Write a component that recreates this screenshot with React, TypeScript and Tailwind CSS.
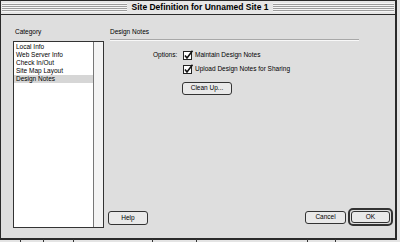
import React from "react";

const categories = ["Local Info", "Web Server Info", "Check In/Out", "Site Map Layout", "Design Notes"];

function CheckBox() {
    return (
        <svg width="11" height="10" viewBox="0 0 11 10" className="shrink-0">
            <rect x="0.5" y="1.5" width="8" height="8" fill="#fff" stroke="#222" />
            <path d="M2 5.5 L4 8 L9.5 0.8" fill="none" stroke="#111" strokeWidth="1.6" />
        </svg>
    );
}

function Button({ label, className }: { label: string; className: string }) {
    return (
        <div className={`flex items-center justify-center rounded-[3px] border border-[#333] bg-[#e9e9e9] text-[6.5px] leading-none text-black ${className}`}>
            {label}
        </div>
    );
}

export default function App() {
    return (
        <div className="relative h-[242px] w-[400px] overflow-hidden bg-[#e4e4e4] font-['Liberation_Sans',Arial,sans-serif] text-black">
            {/* ticks of the window behind */}
            <div className="absolute bottom-0 left-[20px] h-[3px] w-px bg-[#333]" />
            <div className="absolute bottom-0 left-[43px] h-[3px] w-px bg-[#333]" />
            <div className="absolute bottom-0 left-[73px] h-[3px] w-px bg-[#333]" />
            <div className="absolute bottom-0 left-[152px] h-[3px] w-px bg-[#333]" />
            <div className="absolute bottom-0 left-[196px] h-[3px] w-px bg-[#333]" />
            <div className="absolute bottom-0 left-[307px] h-[3px] w-px bg-[#333]" />
            <div className="absolute bottom-0 left-[335px] h-[3px] w-px bg-[#333]" />

            {/* Dialog window */}
            <div className="flex h-[240px] w-[397px] flex-col border border-r-2 border-b-2 border-[#2a2a2a] bg-[#dedede]">
                {/* Title bar */}
                <div className="relative h-[14px] shrink-0 border-b border-[#2a2a2a] bg-[#e6e6e6] px-[1px] py-[2px]">
                    <div className="h-[9px] w-full bg-[repeating-linear-gradient(to_bottom,#f6f6f6_0px,#f6f6f6_1px,#9c9c9c_1px,#9c9c9c_2px)]" />
                    <div className="absolute left-[126px] top-0 flex h-[13px] w-[146px] items-center justify-center bg-[#e6e6e6] text-[8.5px] font-bold leading-none">
                        Site Definition for Unnamed Site 1
                    </div>
                </div>

                {/* Body */}
                <div className="flex flex-1 pb-[10px] pl-[12px] pr-[2px] pt-[13px]">
                    {/* Category column */}
                    <div className="flex w-[91px] flex-col">
                        <div className="mb-[5px] pl-[2px] text-[6.5px] leading-[8px]">Category</div>
                        <div className="flex flex-1 border border-[#333] bg-white">
                            <div className="flex-1 pt-px">
                                {categories.map((c) => (
                                    <div
                                        key={c}
                                        className={`h-[8px] pl-[2px] text-[6.5px] leading-[8px] ${c === "Design Notes" ? "bg-[#d6d6d6]" : ""}`}
                                    >
                                        {c}
                                    </div>
                                ))}
                            </div>
                            <div className="w-[10px] border-l border-[#777] bg-[#f3f3f3]" />
                        </div>
                    </div>

                    {/* Settings column */}
                    <div className="ml-[4px] flex flex-1 flex-col">
                        <div className="pl-[2px] text-[6.5px] leading-[8px]">Design Notes</div>
                        <div className="ml-[2px] mt-[3px] h-[2px] w-[249px] border-t border-[#a8a8a8] border-b border-b-[#f8f8f8]" />

                        <div className="ml-[45px] mt-[9px] flex items-center">
                            <span className="w-[30px] text-[6.5px] leading-none">Options:</span>
                            <CheckBox />
                            <span className="ml-[1px] text-[6.5px] leading-none">Maintain Design Notes</span>
                        </div>
                        <div className="ml-[75px] mt-[4px] flex items-center">
                            <CheckBox />
                            <span className="ml-[1px] text-[6.5px] leading-none">Upload Design Notes for Sharing</span>
                        </div>
                        <Button label="Clean Up..." className="ml-[74px] mt-[8px] h-[13px] w-[50px]" />

                        <div className="mb-[2px] mt-auto flex items-end">
                            <Button label="Help" className="mb-[1px] h-[14px] w-[40px]" />
                            <div className="flex-1" />
                            <Button label="Cancel" className="mb-[2px] h-[13px] w-[41px]" />
                            <div className="ml-[2px] rounded-[5px] border-2 border-[#333] p-px">
                                <Button label="OK" className="h-[12px] w-[39px]" />
                            </div>
                        </div>
                    </div>
                </div>
            </div>
        </div>
    );
}
